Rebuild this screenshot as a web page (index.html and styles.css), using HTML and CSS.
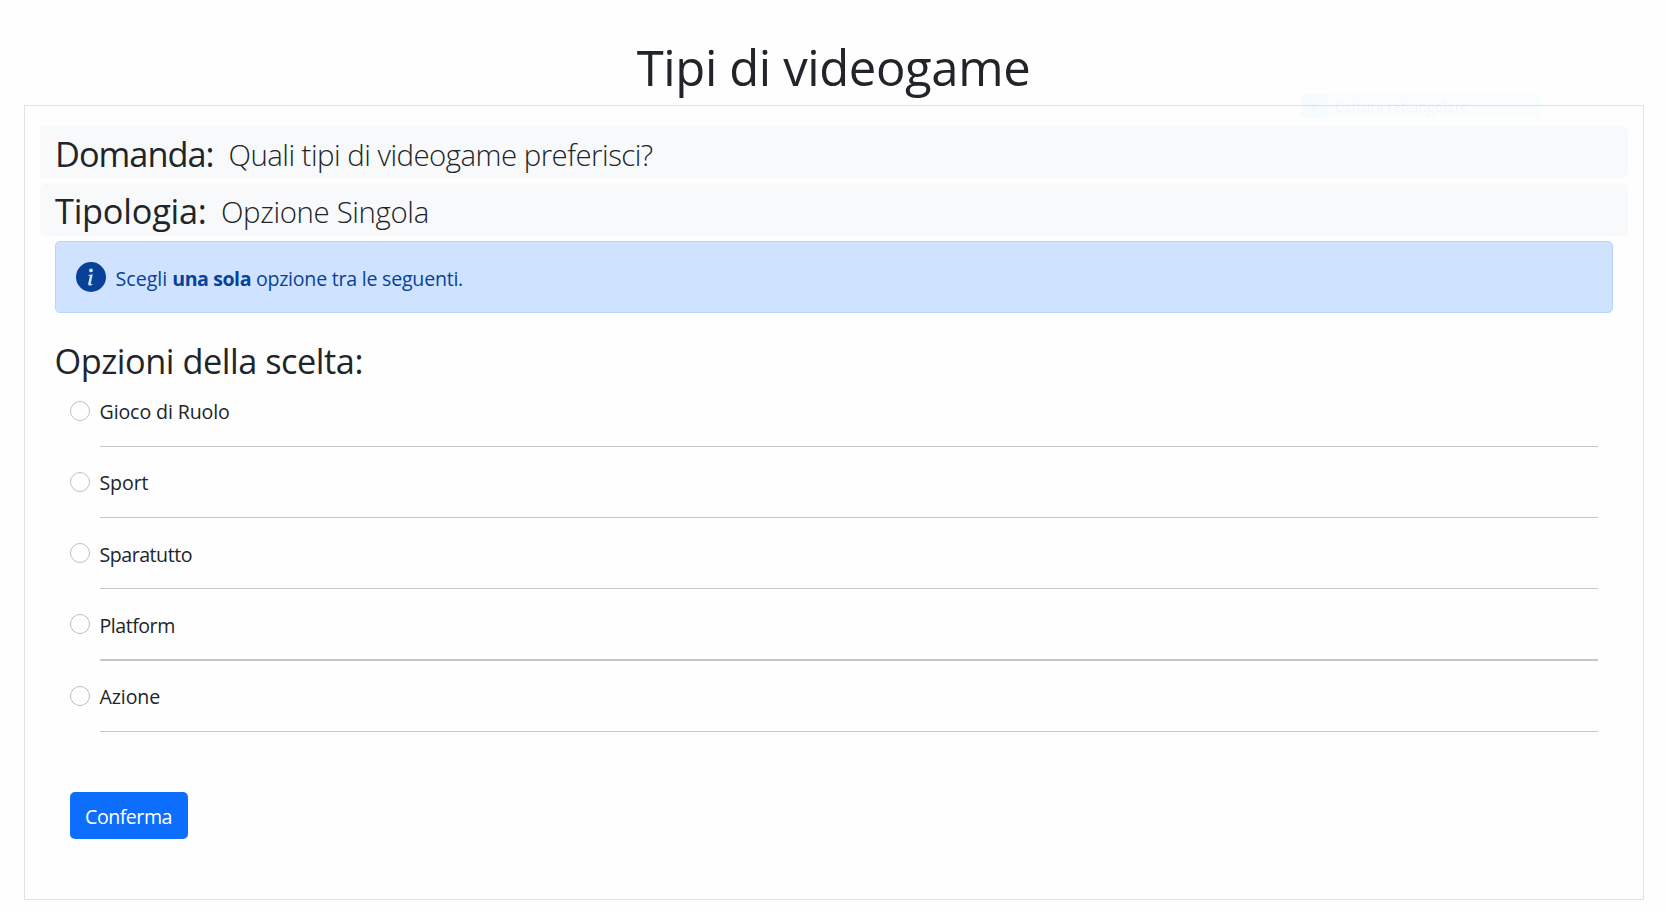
FILE: index.html
```html
<!DOCTYPE html>
<html lang="it">
<head>
<meta charset="utf-8">
<title>Tipi di videogame</title>
<link rel="stylesheet" href="styles.css">
</head>
<body>
<h1 class="title">Tipi di videogame</h1>
<main class="panel">
  <div class="info-row">
    <h3 class="label label-question">Domanda:</h3>
    <span class="value value-question">Quali tipi di videogame preferisci?</span>
  </div>
  <div class="info-row info-row-type">
    <h3 class="label label-type">Tipologia:</h3>
    <span class="value">Opzione Singola</span>
  </div>
  <div class="alert">
    <svg class="alert-icon" viewBox="0 0 16 16" fill="currentColor"><path d="M8 16A8 8 0 1 0 8 0a8 8 0 0 0 0 16zm.93-9.412-1 4.705c-.07.34.029.533.304.533.194 0 .487-.07.686-.246l-.088.416c-.287.346-.92.598-1.465.598-.703 0-1.002-.422-.808-1.319l.738-3.468c.064-.293.006-.399-.287-.47l-.451-.081.082-.381 2.29-.287zM8 5.5a1 1 0 1 1 0-2 1 1 0 0 1 0 2z"/></svg>
    <span class="alert-text">Scegli <strong>una sola</strong><span class="alert-rest"> opzione tra le seguenti.</span></span>
  </div>
  <h3 class="options-title">Opzioni della scelta:</h3>
  <form class="options">
    <label class="option"><input class="radio" type="radio" name="scelta"><span class="option-text">Gioco di Ruolo</span></label>
    <label class="option"><input class="radio" type="radio" name="scelta"><span class="option-text">Sport</span></label>
    <label class="option"><input class="radio" type="radio" name="scelta"><span class="option-text low tight">Sparatutto</span></label>
    <label class="option"><input class="radio" type="radio" name="scelta"><span class="option-text low tight thick">Platform</span></label>
    <label class="option"><input class="radio" type="radio" name="scelta"><span class="option-text">Azione</span></label>
    <button class="confirm" type="button">Conferma</button>
  </form>
</main>
<div class="ghost"><span class="ghost-icon"><svg class="ghost-plus" viewBox="0 0 10 10"><path d="M5 1v8M1 5h8" stroke="currentColor" stroke-width="2"/></svg></span><span class="ghost-text">Cattura rettangolare</span></div>
</body>
</html>
```
FILE: styles.css
```css
* { box-sizing: border-box; }
body {
  margin: 0;
  height: 911px;
  overflow: hidden;
  background: #fefefe;
  color: #212529;
  font-family: "Segoe UI", "Open Sans", "Noto Sans", sans-serif;
  font-size: 20px;
  line-height: 30px;
}
h1, h3 { margin: 0; font-weight: 400; }
.title {
  height: 105px;
  padding-top: 37px;
  font-size: 49px;
  line-height: 60px;
  letter-spacing: -0.38px;
  text-align: center;
}
.panel {
  width: 1620px;
  height: 795px;
  margin-left: 24px;
  padding: 20px 15px 0;
  border: 1px solid #dee2e6;
}
.info-row {
  display: flex;
  align-items: baseline;
  height: 52px;
  margin-bottom: 6px;
  padding: 4px 15px;
  border-radius: 5px;
  background: #f8f9fa;
}
.info-row-type { padding-top: 3px; }
.label { font-size: 34.3px; line-height: 48px; white-space: nowrap; }
.label-question { width: 173.5px; letter-spacing: -0.98px; }
.label-type { width: 166px; letter-spacing: -0.22px; }
.value {
  margin-bottom: 1px;
  transform: translateY(-1px);
  font-size: 29.4px;
  line-height: 42px;
  font-weight: 300;
  letter-spacing: -0.36px;
  white-space: nowrap;
}
.value-question { letter-spacing: -0.53px; }
.alert {
  display: flex;
  width: 1558px;
  height: 72px;
  margin: -1px 0 0 15px;
  padding: 20px;
  border: 1px solid #b6d4fe;
  border-radius: 5px;
  background: #cfe2ff;
  color: #084298;
}
.alert-icon { width: 30px; height: 30px; margin-right: 9.5px; }
.alert-text { font-size: 19.6px; line-height: 34px; white-space: nowrap; }
.alert-text strong { letter-spacing: -0.45px; }
.alert-rest { letter-spacing: -0.24px; }
.options-title {
  height: 63px;
  margin-left: 14.5px;
  padding-top: 25px;
  font-size: 34.3px;
  line-height: 46px;
  letter-spacing: -0.46px;
  white-space: nowrap;
}
.options { padding-left: 30px; }
.option { display: flex; width: 1528px; }
.radio {
  appearance: none;
  width: 20px;
  height: 20px;
  margin: 25px 10px 0 0;
  border: 1px solid #bfbfbf;
  border-radius: 50%;
  background: #fff;
}
.option-text {
  flex: 1;
  height: 71px;
  padding-top: 21px;
  border-bottom: 1px solid #c4c6c7;
  font-size: 19.6px;
  letter-spacing: -0.12px;
  text-indent: -0.5px;
}
.low { padding-top: 22px; }
.tight { letter-spacing: -0.48px; }
.thick { height: 72px; border-bottom-width: 2px; }
.confirm {
  display: block;
  width: 118px;
  height: 47px;
  margin-top: 60px;
  padding: 2px 1px 0 0;
  border: 0;
  border-radius: 5px;
  background: #0d6efd;
  color: #fff;
  font: 19.6px/30px "Segoe UI", "Open Sans", "Noto Sans", sans-serif;
  letter-spacing: -0.48px;
}
/* Fading capture tooltip over the panel's top edge */
.ghost {
  position: absolute;
  left: 1301px;
  top: 94px;
  display: flex;
  width: 240px;
  height: 23px;
  background: rgba(200, 235, 255, 0.07);
}
.ghost-icon {
  display: flex;
  align-items: center;
  justify-content: center;
  width: 26px;
  background: rgba(200, 235, 255, 0.08);
  color: rgba(33, 80, 110, 0.03);
}
.ghost-plus { width: 10px; height: 10px; }
.ghost-text {
  padding-left: 8px;
  color: rgba(33, 37, 41, 0.05);
  font-size: 14px;
  line-height: 26px;
}
```
